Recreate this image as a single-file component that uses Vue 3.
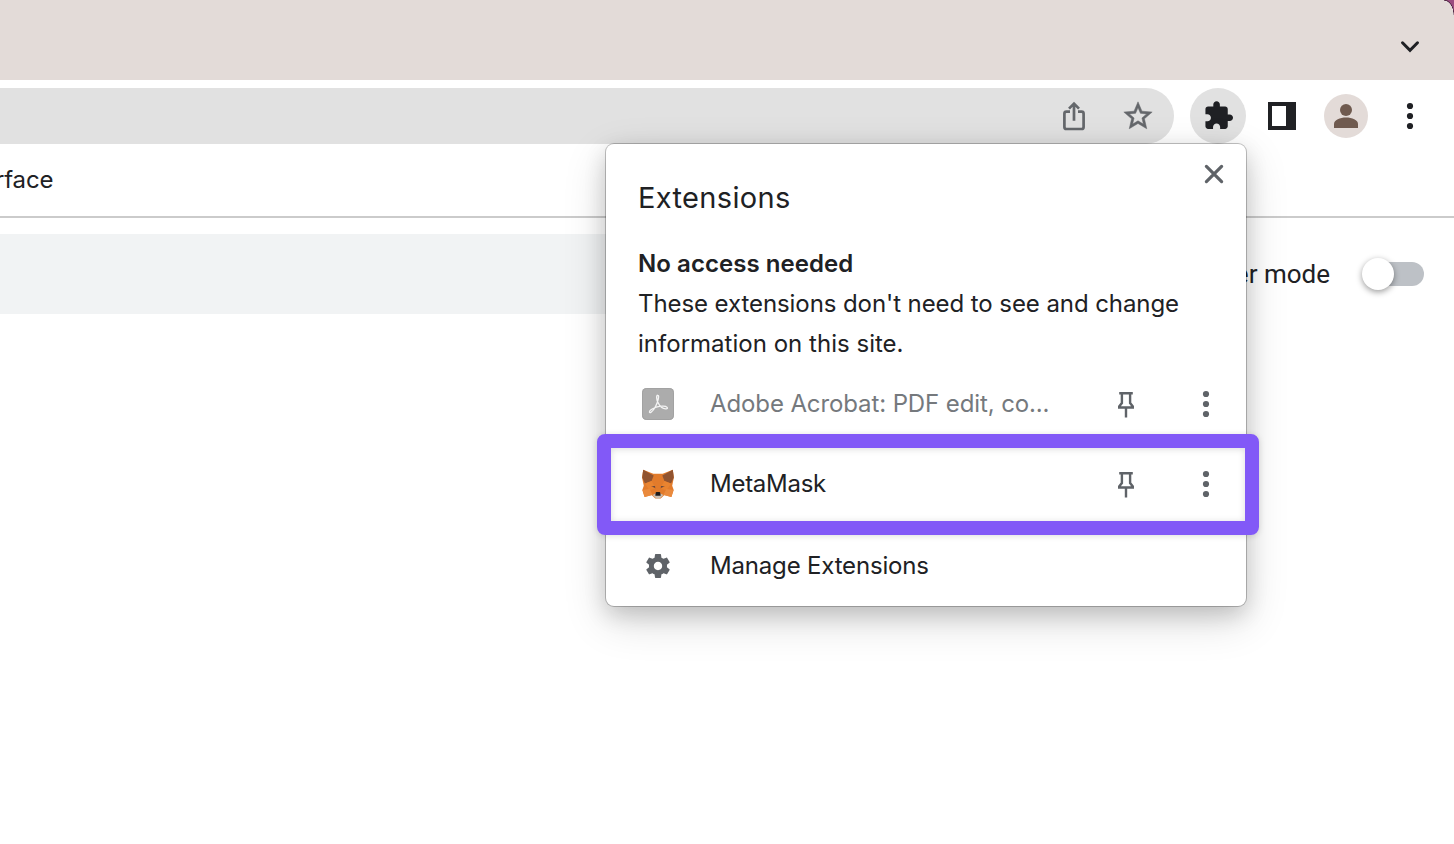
<script setup>
const extensions = [
  { id: 'acrobat', name: 'Adobe Acrobat: PDF edit, co...', muted: true },
  { id: 'metamask', name: 'MetaMask', muted: false },
]
</script>

<template>
  <div class="window">
    <header class="tabs">
      <i class="corner"></i>
      <svg class="chevron" width="20" height="14" viewBox="0 0 20 14"><path d="M2.5 2.8 10 10.3 17.5 2.8" fill="none" stroke="#1f2024" stroke-width="3" stroke-linecap="round" stroke-linejoin="miter" /></svg>
    </header>

    <div class="toolbar">
      <div class="omnibox">
        <svg width="32" height="34" viewBox="0 0 32 34" fill="none" stroke="#64676b" stroke-width="2.7">
          <path d="M12 12.700H8.400a2 2 0 0 0-2 2v13.300a2 2 0 0 0 2 2h15.200a2 2 0 0 0 2-2V14.700a2 2 0 0 0-2-2H20" />
          <path d="M16 21.700V4.800M11 9.600 16 4.600l5 5" />
        </svg>
        <svg width="34" height="34" viewBox="0 0 24 24" fill="#64676b" stroke="#64676b" stroke-width=".35"><path d="M22 9.24l-7.19-.62L12 2 9.19 8.63 2 9.24l5.46 4.73L5.82 21 12 17.27 18.18 21l-1.63-7.03L22 9.24zM12 15.4l-3.76 2.27 1-4.28-3.32-2.88 4.38-.38L12 6.1l1.71 4.04 4.38.38-3.32 2.88 1 4.28L12 15.4z" /></svg>
      </div>
      <div class="puzzle">
        <svg width="32" height="32" viewBox="0 0 24 24" fill="#1f2024"><path transform="translate(.6 0) scale(.985)" d="M20.5 11H19V7c0-1.1-.9-2-2-2h-4V3.5C13 2.12 11.88 1 10.5 1S8 2.12 8 3.5V5H4c-1.1 0-1.99.9-1.99 2v3.8H3.5c1.49 0 2.7 1.21 2.7 2.7s-1.21 2.7-2.7 2.7H2V20c0 1.1.9 2 2 2h3.8v-1.5c0-1.49 1.21-2.7 2.7-2.7s2.7 1.21 2.7 2.7V22H17c1.1 0 2-.9 2-2v-4h1.5c1.38 0 2.5-1.12 2.5-2.5S21.88 11 20.5 11z" /></svg>
      </div>
      <div class="sidepanel"></div>
      <div class="avatar">
        <svg width="44" height="44" viewBox="0 0 44 44" fill="#6f5a4f"><circle cx="22" cy="16" r="6" /><path d="M10 34v-4c0-4.2 6-6.6 12-6.6s12 2.400 12 6.600v4z" /></svg>
      </div>
      <svg class="menu" width="8" height="28" viewBox="0 0 8 28" fill="#1f2024"><circle cx="4" cy="4" r="3.1" /><circle cx="4" cy="14" r="3.1" /><circle cx="4" cy="24" r="3.1" /></svg>
    </div>

    <div class="bookmarks"><span>rface</span></div>

    <main class="page">
      <div class="search"></div>
      <div class="devmode">
        <span>er mode</span>
        <div class="toggle"><i></i></div>
      </div>
    </main>

    <section class="popup">
      <svg class="close" width="20" height="20" viewBox="0 0 20 20"><path d="M2.400 2.400 17.600 17.600M17.600 2.400 2.400 17.600" stroke="#5f6368" stroke-width="3.200" stroke-linecap="round" /></svg>
      <h1>Extensions</h1>
      <h2>No access needed</h2>
      <p><span class="line one">These extensions don't need to see and change</span><span class="line two">information on this site.</span></p>
      <div v-for="e in extensions" :key="e.id" class="row" :class="e.id">
        <svg v-if="e.muted" class="icon" width="32" height="32" viewBox="0 0 32 32">
          <rect width="32" height="32" rx="4.500" fill="#acacac" />
          <rect x=".5" y=".5" width="31" height="31" rx="4" fill="none" stroke="#a2a2a2" />
          <path d="M15.800 7.300c-1.900-.1-1.200 4.500.3 7.500 1.800 3.700 5.200 6.200 7.900 6.100 2.800-.2 1.300-2.900-3.400-2.700-4.500.1-8.700 1.500-11.600 3.600-2.500 1.900-1.600 3.700.1 2.500 3-2.200 6.400-8.900 7.200-13.300.5-2.500.3-3.700-.5-3.700z" fill="none" stroke="#f4f4f4" stroke-width="1.350" />
        </svg>
        <svg v-else class="icon" width="32" height="32" viewBox="0 0 32 32">
          <path d="M1.200 1.700 11.300 5.700h9.400L30.800 1.700l1.100 7.900-1.700 8.100 1.500 4.200-2.300 7-7-2-3.700 3.700h-5.400l-3.700-3.700-7 2-2.300-7 1.500-4.200L0 9.600z" fill="#e27b2b" />
          <path d="M1.200 1.700 11.700 7.400 9.600 13 3 15.500.2 9.600zM30.800 1.700 20.300 7.400 22.400 13l6.600 2.500 2.800-5.900z" fill="#915430" />
          <path d="m3 15.500 6.600-2.500 4.200 7.200-6.200 2.200zM29 15.500 22.400 13l-4.200 7.200 6.200 2.200z" fill="#e98430" />
          <path d="M.5 21.900 7.600 21l3 5.900-8 2zM31.500 21.900l-7.100-.9-3 5.900 8 2z" fill="#ea8a3d" />
          <path d="m9 17.900 4 .2.500 2.400zm14 0-4 .2-.5 2.400z" fill="#985734" />
          <path d="m10.800 17.900 1.700.3.400 1.400zm10.400 0-1.700.3-.4 1.400z" fill="#32404e" />
          <path d="m10.600 26.900 3-1.500h4.800l3 1.500-3.700 3.700h-3.400z" fill="#c9bdb1" />
          <path d="m13.700 24.800.7-.8h3.200l.7.800.4 3h-5.400z" fill="#1c1a1b" />
        </svg>
        <span class="name">{{ e.name }}</span>
        <svg class="pin" width="20" height="28" viewBox="0 0 20 28" fill="none" stroke="#5f6368" stroke-width="2.400"><path d="M3.200 3.200h13.600M5.900 3.200v9.900L3.200 16.500v1h13.600v-1L14.100 13.100V3.200M10 17.500v10" /></svg>
        <svg class="dots" width="8" height="28" viewBox="0 0 8 28" fill="#5f6368"><circle cx="4" cy="4" r="3.100" /><circle cx="4" cy="14" r="3.100" /><circle cx="4" cy="24" r="3.100" /></svg>
      </div>
      <div class="row manage">
        <svg class="icon" width="32" height="32" viewBox="-1.330 -1.330 26.660 26.660" fill="#5f6368"><path d="M19.430 12.980c.04-.32.07-.64.07-.98s-.03-.66-.07-.98l2.110-1.650c.19-.15.240-.42.120-.64l-2-3.460c-.12-.22-.39-.3-.61-.22l-2.490 1c-.52-.4-1.080-.73-1.690-.98l-.38-2.650C14.460 2.180 14.250 2 14 2h-4c-.25 0-.46.18-.49.42l-.38 2.650c-.61.250-1.170.59-1.690.98l-2.490-1c-.23-.09-.49 0-.61.22l-2 3.460c-.13.22-.07.49.12.64l2.110 1.650c-.04.32-.07.65-.07.98s.03.66.07.98l-2.110 1.650c-.19.15-.24.42-.12.64l2 3.460c.12.220.39.300.61.220l2.490-1c.52.400 1.080.730 1.690.980l.38 2.650c.03.240.24.420.49.420h4c.25 0 .46-.18.49-.42l.38-2.650c.61-.25 1.170-.59 1.690-.98l2.490 1c.23.09.49 0 .61-.22l2-3.460c.12-.22.07-.49-.12-.64l-2.110-1.650zM12 15.500c-1.930 0-3.500-1.570-3.500-3.500s1.570-3.500 3.500-3.500 3.500 1.570 3.500 3.500-1.570 3.500-3.500 3.500z" /></svg>
        <span class="name">Manage Extensions</span>
      </div>
      <div class="highlight"></div>
    </section>
  </div>
</template>

<style>
body { margin: 0; overflow: hidden; }
</style>

<style scoped>
.window { position: relative; width: 1454px; height: 844px; overflow: hidden; background: #fff; color: #202124; font-family: Inter, "Liberation Sans", sans-serif; }
svg { display: block; flex: none; }
.tabs { position: relative; height: 80px; box-sizing: border-box; background: #e3dbd8; display: flex; justify-content: flex-end; padding: 40px 34px 0 0; }
.corner { position: absolute; right: 0; top: 0; width: 10px; height: 15px; background: radial-gradient(ellipse 10px 15px at 0 100%, transparent 90%, #eeeae8 93%, #4b2540 98%, #9b4c80 106%); }
.toolbar { height: 64px; box-sizing: border-box; padding-top: 8px; display: flex; }
.omnibox { width: 1174px; height: 56px; box-sizing: border-box; padding-right: 19px; background: #e1e1e1; border-radius: 0 28px 28px 0; display: flex; align-items: center; justify-content: flex-end; gap: 31px; }
.puzzle { width: 56px; height: 56px; margin-left: 16px; border-radius: 50%; background: #e1e1e1; display: flex; align-items: center; justify-content: center; }
.sidepanel { box-sizing: border-box; width: 28px; height: 28px; margin: 14px 0 0 22px; background: #fff; border: 4px solid #202124; border-right-width: 10px; }
.avatar { width: 44px; height: 44px; margin: 6px 0 0 28px; border-radius: 50%; background: #e3dbd8; }
.menu { margin: 14px 0 0 38px; }
.bookmarks { height: 74px; box-sizing: border-box; border-bottom: 2px solid #cbcbcb; padding-top: 20px; }
.bookmarks span { display: block; margin-left: -5px; font-size: 24px; line-height: 32px; letter-spacing: -.15px; }
.page { padding-top: 16px; display: flex; justify-content: space-between; }
.search { width: 1000px; height: 80px; background: #f1f3f4; }
.devmode { height: 80px; display: flex; align-items: center; padding-right: 30px; }
.devmode span { font: 26px/32px Roboto, sans-serif; letter-spacing: 0; }
.toggle { width: 60px; height: 24px; border-radius: 12px; background: #bdc1c6; margin-left: 34px; position: relative; }
.toggle i { position: absolute; left: -2px; top: -4px; width: 32px; height: 32px; border-radius: 50%; background: #fff; box-shadow: 0 2px 6px rgba(0,0,0,.4); }
.popup { position: absolute; left: 606px; top: 144px; width: 640px; height: 462px; box-sizing: border-box; padding: 32px 32px 0; background: #fff; border-radius: 8px; box-shadow: 0 0 0 1px rgba(0,0,0,.23), 0 8px 22px rgba(0,0,0,.16), 0 14px 44px rgba(0,0,0,.16); }
.close { position: absolute; right: 22px; top: 20px; }
h1 { margin: 0; font-weight: 400; font-size: 29px; line-height: 44px; letter-spacing: .35px; }
h2 { margin: 24px 0 0; font-weight: 600; font-size: 24px; line-height: 40px; letter-spacing: .06px; }
p { margin: 0; font-size: 24px; line-height: 40px; letter-spacing: -.08px; }
.two { letter-spacing: .02px; }
.line { display: block; white-space: nowrap; }
.row { height: 80px; display: flex; align-items: center; padding-left: 4px; }
.name { margin-left: 36px; width: 406px; font-size: 24px; line-height: 32px; letter-spacing: -.18px; white-space: nowrap; }
.acrobat .name { color: #75797d; letter-spacing: -.11px; }
.metamask .name { letter-spacing: -.27px; }
.dots { margin-left: 66px; }
.manage { margin-top: 2px; }
.highlight { position: absolute; left: -9px; top: 290px; width: 662px; height: 101px; box-sizing: border-box; border: 14px solid #8259f7; border-radius: 8px; box-shadow: 0 1px 6px rgba(0,0,0,.14), inset 0 1px 7px rgba(0,0,0,.14); }
</style>
